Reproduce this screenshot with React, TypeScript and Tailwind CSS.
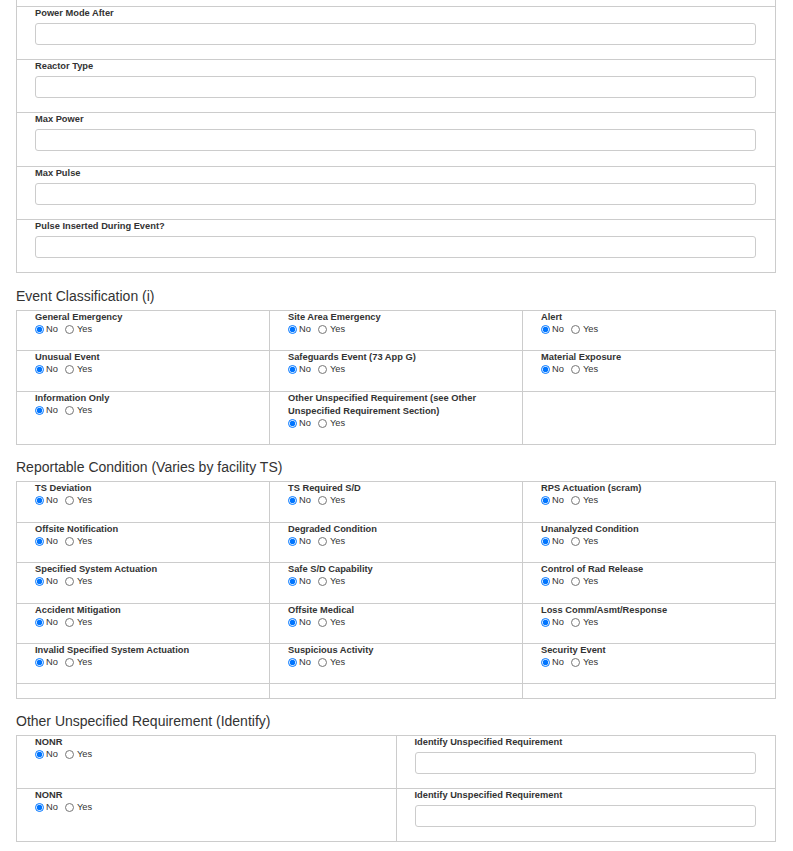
import React from "react";

const topFields = ["Power Mode After", "Reactor Type", "Max Power", "Max Pulse", "Pulse Inserted During Event?"];

const eventItems = [
  "General Emergency",
  "Site Area Emergency",
  "Alert",
  "Unusual Event",
  "Safeguards Event (73 App G)",
  "Material Exposure",
  "Information Only",
  "Other Unspecified Requirement (see Other Unspecified Requirement Section)",
  null,
];

const reportItems = [
  "TS Deviation",
  "TS Required S/D",
  "RPS Actuation (scram)",
  "Offsite Notification",
  "Degraded Condition",
  "Unanalyzed Condition",
  "Specified System Actuation",
  "Safe S/D Capability",
  "Control of Rad Release",
  "Accident Mitigation",
  "Offsite Medical",
  "Loss Comm/Asmt/Response",
  "Invalid Specified System Actuation",
  "Suspicious Activity",
  "Security Event",
];

function Label({ children }: { children: React.ReactNode }) {
  return <div className="text-[9.3px] font-bold leading-[13px] text-[#333]">{children}</div>;
}

function YesNo({ name }: { name: string }) {
  return (
    <div className="flex h-[11px] items-center text-[9.3px] text-[#333]">
      <input type="radio" name={name} defaultChecked className="m-0 h-[9px] w-[9px] accent-[#0075ff]" />
      <span className="ml-[2px]">No</span>
      <input type="radio" name={name} className="m-0 ml-[7px] h-[9px] w-[9px]" />
      <span className="ml-[3px]">Yes</span>
    </div>
  );
}

function Heading({ children, first }: { children: React.ReactNode; first?: boolean }) {
  return (
    <h3
      className={`${first ? "mt-[13px]" : "mt-[12px]"} mb-[4px] ml-[16px] text-[14px] leading-[20px] text-[#333]`}
    >
      {children}
    </h3>
  );
}

function TextBox() {
  return <input type="text" className="mt-[3px] block h-[22px] w-full rounded-[3px] border border-[#ccc] bg-white" />;
}

export default function App() {
  return (
    <div className="h-[851px] w-[793px] overflow-hidden bg-white font-['Liberation_Sans',Arial,sans-serif]">
      {/* tail of the reactor block */}
      <div className="ml-[16px] w-[760px] border-x border-b border-[#ccc]">
        <div className="h-[7px] border-b border-[#ccc]" />
        {topFields.map((f, i) => (
          <div
            key={f}
            className={`pl-[18px] pr-[19px] ${i === 2 ? "pb-[15px]" : "pb-[14px]"} ${
              i < topFields.length - 1 ? "border-b border-[#ccc]" : ""
            }`}
          >
            <Label>{f}</Label>
            <TextBox />
          </div>
        ))}
      </div>

      <Heading first>Event Classification (i)</Heading>
      <div className="ml-[16px] grid w-[760px] grid-cols-3 border-l border-t border-[#ccc]">
        {eventItems.map((item, i) => (
          <div
            key={i}
            className={`border-b border-r border-[#ccc] pl-[18px] pr-[10px] ${
              Math.floor(i / 3) === 1 ? "pb-[16px]" : "pb-[15px]"
            }`}
          >
            {item && (
              <>
                <Label>{item}</Label>
                <YesNo name={`ev${i}`} />
              </>
            )}
          </div>
        ))}
      </div>

      <Heading>Reportable Condition (Varies by facility TS)</Heading>
      <div className="ml-[16px] grid w-[760px] grid-cols-3 border-l border-t border-[#ccc]">
        {reportItems.map((item, i) => (
          <div
            key={item}
            className={`border-b border-r border-[#ccc] pl-[18px] pr-[10px] ${
              Math.floor(i / 3) % 2 === 0 && i < 9 ? "pb-[16px]" : "pb-[15px]"
            }`}
          >
            <Label>{item}</Label>
            <YesNo name={`rc${i}`} />
          </div>
        ))}
        {[0, 1, 2].map((i) => (
          <div key={`e${i}`} className="h-[15px] border-b border-r border-[#ccc]" />
        ))}
      </div>

      <Heading>Other Unspecified Requirement (Identify)</Heading>
      <div className="ml-[16px] grid w-[760px] grid-cols-2 border-l border-t border-[#ccc]">
        {[0, 1].map((i) => (
          <React.Fragment key={i}>
            <div className="border-b border-r border-[#ccc] pl-[18px] pb-[14px]">
              <Label>NONR</Label>
              <YesNo name={`nonr${i}`} />
            </div>
            <div className="border-b border-r border-[#ccc] pl-[18px] pr-[19px] pb-[14px]">
              <Label>Identify Unspecified Requirement</Label>
              <TextBox />
            </div>
          </React.Fragment>
        ))}
      </div>
    </div>
  );
}
